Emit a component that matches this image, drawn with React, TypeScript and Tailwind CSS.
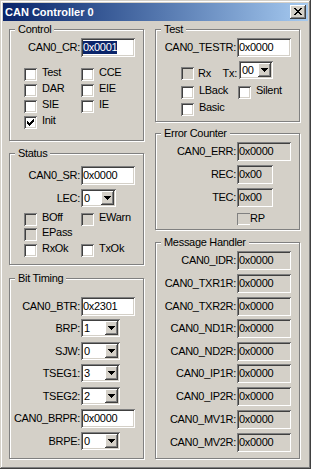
import React from "react";

// classic 3D edges
const sunken =
  "shadow-[inset_1px_1px_0_#808080,inset_-1px_-1px_0_#ffffff,inset_2px_2px_0_#404040,inset_-2px_-2px_0_#d4d0c8]";
const raised =
  "shadow-[inset_-1px_-1px_0_#404040,inset_1px_1px_0_#ffffff,inset_-2px_-2px_0_#808080]";

function CloseGlyph() {
  return (
    <svg width="8" height="7" viewBox="0 0 8 7" shapeRendering="crispEdges">
      <path
        fill="#000"
        d="M0 0h2v1H0z M6 0h2v1H6z M1 1h2v1H1z M5 1h2v1H5z M2 2h4v1H2z M3 3h2v1H3z M2 4h4v1H2z M1 5h2v1H1z M5 5h2v1H5z M0 6h2v1H0z M6 6h2v1H6z"
      />
    </svg>
  );
}

function Arrow() {
  return (
    <svg width="7" height="4" viewBox="0 0 7 4" shapeRendering="crispEdges">
      <path fill="#000" d="M0 0h7v1H0z M1 1h5v1H1z M2 2h3v1H2z M3 3h1v1H3z" />
    </svg>
  );
}

function CheckMark() {
  return (
    <svg width="7" height="7" viewBox="0 0 7 7" shapeRendering="crispEdges">
      <path
        fill="#000"
        d="M0 2h1v3H0z M1 3h1v3H1z M2 4h1v3H2z M3 3h1v3H3z M4 2h1v3H4z M5 1h1v3H5z M6 0h1v3H6z"
      />
    </svg>
  );
}

type GroupProps = {
  title: string;
  className?: string;
  children?: React.ReactNode;
};

function GroupBox({ title, className = "", children }: GroupProps) {
  return (
    <div
      className={`relative border border-[#808080] shadow-[inset_1px_1px_0_#ffffff,1px_1px_0_#ffffff] ${className}`}
    >
      <span className="absolute left-[5px] -top-[7px] bg-[#d4d0c8] px-[3px] leading-[13px] whitespace-nowrap">
        {title}
      </span>
      {children}
    </div>
  );
}

function Field({
  value,
  w = "w-[54px]",
  ro,
  sel,
}: {
  value: string;
  w?: string;
  ro?: boolean;
  sel?: boolean;
}) {
  return (
    <div
      className={`${w} h-[19px] flex items-center pl-[2px] overflow-hidden ${
        ro ? "bg-[#d4d0c8]" : "bg-white"
      } ${sunken}`}
    >
      {sel ? (
        <span className="bg-[#0a246a] text-white leading-[13px]">{value}</span>
      ) : (
        <span className="leading-[13px]">{value}</span>
      )}
    </div>
  );
}

function Select({ value, w = "w-[39px]" }: { value: string; w?: string }) {
  return (
    <div className={`${w} h-[18px] flex bg-white p-[2px] ${sunken}`}>
      <span className="flex-1 leading-[14px] pl-[1px]">{value}</span>
      <div
        className={`w-[13px] h-[14px] bg-[#d4d0c8] flex items-center justify-center ${raised}`}
      >
        <Arrow />
      </div>
    </div>
  );
}

function Check({
  label,
  checked,
  disabled,
}: {
  label: string;
  checked?: boolean;
  disabled?: boolean;
}) {
  return (
    <div className="flex items-start h-[13px]">
      <div
        className={`w-[13px] h-[13px] shrink-0 p-[3px] ${
          disabled ? "bg-[#d4d0c8]" : "bg-white"
        } ${sunken}`}
      >
        {checked && <CheckMark />}
      </div>
      <span className="ml-[5px] -mt-[2px] leading-[13px] whitespace-nowrap">
        {label}
      </span>
    </div>
  );
}

// label + control, label right aligned against the control
function Row({
  label,
  right,
  className = "",
  children,
}: {
  label: string;
  right?: boolean;
  className?: string;
  children: React.ReactNode;
}) {
  return (
    <div className={`flex items-start h-[19px] ${className}`}>
      <div
        className={`flex justify-end whitespace-nowrap h-[19px] items-center ${
          right ? "w-[80px]" : "w-[70px]"
        }`}
      >
        {label}
      </div>
      <div className="ml-[1px]">{children}</div>
    </div>
  );
}

function CheckPair({
  a,
  b,
  className = "",
}: {
  a: React.ReactNode;
  b?: React.ReactNode;
  className?: string;
}) {
  return (
    <div className={`flex pl-[14px] ${className}`}>
      <div className="w-[57px]">{a}</div>
      {b}
    </div>
  );
}

export default function App() {
  const handler: [string, string][] = [
    ["CAN0_IDR:", "mt-0"],
    ["CAN0_TXR1R:", "mt-[4px]"],
    ["CAN0_TXR2R:", "mt-[4px]"],
    ["CAN0_ND1R:", "mt-[3px]"],
    ["CAN0_ND2R:", "mt-[4px]"],
    ["CAN0_IP1R:", "mt-[3px]"],
    ["CAN0_IP2R:", "mt-[4px]"],
    ["CAN0_MV1R:", "mt-[4px]"],
    ["CAN0_MV2R:", "mt-[4px]"],
  ];

  return (
    <div className="w-[311px] h-[469px] bg-[#d4d0c8] p-[3px] text-black text-[11px] tracking-[-0.3px] font-['Liberation_Sans',Arial,sans-serif] shadow-[inset_-1px_-1px_0_#404040,inset_1px_1px_0_#d4d0c8,inset_-2px_-2px_0_#808080,inset_2px_2px_0_#ffffff]">
      {/* title bar */}
      <div className="flex items-center h-[18px] px-[2px] bg-linear-to-r from-[#0a246a] to-[#a6caf0]">
        <span className="font-bold text-white tracking-normal leading-[18px]">
          CAN Controller 0
        </span>
        <div
          className={`ml-auto w-[16px] h-[14px] bg-[#d4d0c8] flex justify-center pt-[3px] ${raised}`}
        >
          <CloseGlyph />
        </div>
      </div>

      <div className="flex pl-[6px] pt-[8px]">
        {/* left column */}
        <div className="flex flex-col w-[135px]">
          <GroupBox title="Control" className="h-[112px] pt-[8px]">
            <Row label="CAN0_CR:">
              <Field value="0x0001" sel />
            </Row>
            <CheckPair
              className="mt-[11px]"
              a={<Check label="Test" />}
              b={<Check label="CCE" />}
            />
            <CheckPair
              className="mt-[3px]"
              a={<Check label="DAR" />}
              b={<Check label="EIE" />}
            />
            <CheckPair
              className="mt-[3px]"
              a={<Check label="SIE" />}
              b={<Check label="IE" />}
            />
            <CheckPair className="mt-[3px]" a={<Check label="Init" checked />} />
          </GroupBox>

          <GroupBox title="Status" className="h-[112px] mt-[12px] pt-[12px]">
            <Row label="CAN0_SR:">
              <Field value="0x0000" />
            </Row>
            <Row label="LEC:" className="mt-[4px]">
              <Select value="0" w="w-[35px]" />
            </Row>
            <CheckPair
              className="mt-[5px]"
              a={<Check label="BOff" disabled />}
              b={<Check label="EWarn" disabled />}
            />
            <CheckPair className="mt-[2px]" a={<Check label="EPass" disabled />} />
            <CheckPair
              className="mt-[3px]"
              a={<Check label="RxOk" />}
              b={<Check label="TxOk" />}
            />
          </GroupBox>

          <GroupBox title="Bit Timing" className="h-[181px] mt-[13px] pt-[18px]">
            <Row label="CAN0_BTR:">
              <Field value="0x2301" />
            </Row>
            <Row label="BRP:" className="mt-[3px]">
              <Select value="1" />
            </Row>
            <Row label="SJW:" className="mt-[4px]">
              <Select value="0" />
            </Row>
            <Row label="TSEG1:" className="mt-[3px]">
              <Select value="3" />
            </Row>
            <Row label="TSEG2:" className="mt-[4px]">
              <Select value="2" />
            </Row>
            <Row label="CAN0_BRPR:" className="mt-[3px]">
              <Field value="0x0000" />
            </Row>
            <Row label="BRPE:" className="mt-[4px]">
              <Select value="0" />
            </Row>
          </GroupBox>
        </div>

        {/* right column */}
        <div className="flex flex-col w-[145px] ml-[11px]">
          <GroupBox title="Test" className="h-[93px] pt-[8px]">
            <Row label="CAN0_TESTR:" right>
              <Field value="0x0000" />
            </Row>
            <div className="flex items-end h-[19px] mt-[4px] pl-[25px]">
              <div
                className={`w-[13px] h-[13px] shrink-0 bg-[#d4d0c8] ${sunken}`}
              />
              <span className="w-[29px] pl-[4px] leading-[13px]">Rx</span>
              <span className="w-[14px] flex justify-end leading-[13px] whitespace-nowrap">
                Tx:
              </span>
              <div className="ml-[2px] self-start">
                <Select value="00" w="w-[34px]" />
              </div>
            </div>
            <div className="flex pl-[25px] mt-[6px]">
              <div className="w-[57px]">
                <Check label="LBack" />
              </div>
              <Check label="Silent" />
            </div>
            <div className="flex pl-[25px] mt-[4px]">
              <Check label="Basic" />
            </div>
          </GroupBox>

          <GroupBox title="Error Counter" className="h-[97px] mt-[11px] pt-[8px]">
            <Row label="CAN0_ERR:" right>
              <Field value="0x0000" ro />
            </Row>
            <Row label="REC:" right className="mt-[4px]">
              <Field value="0x00" w="w-[36px]" ro />
            </Row>
            <Row label="TEC:" right className="mt-[4px]">
              <Field value="0x00" w="w-[36px]" ro />
            </Row>
            <div className="flex items-start pl-[81px] mt-[6px]">
              <div className="w-[13px] h-[12px] shrink-0 shadow-[inset_1px_1px_0_#808080,inset_0_-1px_0_#ffffff]" />
              <span className="-mt-[1px] leading-[13px]">RP</span>
            </div>
          </GroupBox>

          <GroupBox
            title="Message Handler"
            className="h-[217px] mt-[12px] pt-[8px]"
          >
            {handler.map(([label, mt]) => (
              <Row key={label} label={label} right className={mt}>
                <Field value="0x0000" ro />
              </Row>
            ))}
          </GroupBox>
        </div>
      </div>
    </div>
  );
}
